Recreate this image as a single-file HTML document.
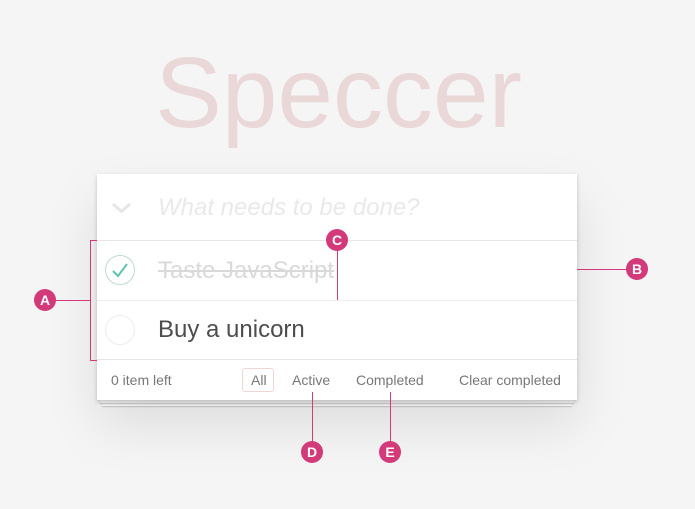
<!DOCTYPE html><html><head><style>
body{margin:0;width:695px;height:509px;background:#f5f5f5;font-family:"Liberation Sans",sans-serif;position:relative;overflow:hidden}
.a{position:absolute}
h1{position:absolute;left:0;width:677px;top:38px;margin:0;text-align:center;font-weight:100;font-size:100px;color:rgba(175,47,47,.15);line-height:110px}
.card{left:97px;top:174px;width:480px;height:226px;background:#fff;box-shadow:0 2px 4px rgba(0,0,0,.2),0 25px 50px rgba(0,0,0,.1)}
.st{background:#fff;box-shadow:0 1px 1px rgba(0,0,0,.2)}
.pk{background:#d33a7a}
.c{width:22px;height:22px;border-radius:50%;background:#d33a7a;color:#fff;font-weight:bold;font-size:14px;text-align:center;line-height:22px}
.f{font-size:14px;color:#777;top:372px}
</style></head><body>
<h1>Speccer</h1>
<div class="a st" style="left:102px;top:400px;width:470px;height:6px"></div>
<div class="a st" style="left:100px;top:398px;width:474px;height:5px"></div>
<div class="a card"></div>
<svg class="a" style="left:0;top:0" width="200" height="240"><path d="M113 204 L121.5 211.5 L130 204" stroke="#e6e6e6" stroke-width="3" fill="none"/></svg>
<div class="a" style="left:158px;top:194px;font-size:24px;font-style:italic;color:#e9e9e9">What needs to be done?</div>
<div class="a" style="left:97px;top:240px;width:480px;height:1px;background:#e6e6e6"></div>
<div class="a" style="left:97px;top:300px;width:480px;height:1px;background:#ededed"></div>
<div class="a" style="left:97px;top:359px;width:480px;height:1px;background:#e6e6e6"></div>
<div class="a" style="left:105px;top:255px;width:28px;height:28px;border:1px solid #bddad5;border-radius:50%"></div>
<svg class="a" style="left:105px;top:255px" width="30" height="30"><path d="M8 16 L13 21 L22 9" stroke="#5dc2af" stroke-width="2" fill="none"/></svg>
<div class="a" style="left:158px;top:257px;font-size:24px;color:#d9d9d9;text-decoration:line-through">Taste JavaScript</div>
<div class="a" style="left:105px;top:315px;width:28px;height:28px;border:1px solid #ededed;border-radius:50%"></div>
<div class="a" style="left:158px;top:316px;font-size:24px;color:#4d4d4d">Buy a unicorn</div>
<div class="a f" style="left:111px">0 item left</div>
<div class="a" style="left:242px;top:368px;width:30px;height:22px;border:1px solid rgba(175,47,47,.2);border-radius:3px"></div>
<div class="a f" style="left:251px">All</div>
<div class="a f" style="left:292px">Active</div>
<div class="a f" style="left:356px">Completed</div>
<div class="a f" style="left:459px">Clear completed</div>
<div class="a pk" style="left:90px;top:240px;width:1px;height:121px"></div>
<div class="a pk" style="left:90px;top:240px;width:7px;height:1px"></div>
<div class="a pk" style="left:90px;top:360px;width:7px;height:1px"></div>
<div class="a pk" style="left:56px;top:300px;width:34px;height:1px"></div>
<div class="a c" style="left:34px;top:289px">A</div>
<div class="a pk" style="left:577px;top:269px;width:50px;height:1px"></div>
<div class="a c" style="left:626px;top:258px">B</div>
<div class="a pk" style="left:337px;top:245px;width:1px;height:55px"></div>
<div class="a c" style="left:326px;top:229px">C</div>
<div class="a pk" style="left:312px;top:392px;width:1px;height:50px"></div>
<div class="a c" style="left:301px;top:441px">D</div>
<div class="a pk" style="left:390px;top:392px;width:1px;height:50px"></div>
<div class="a c" style="left:379px;top:441px">E</div>
</body></html>
